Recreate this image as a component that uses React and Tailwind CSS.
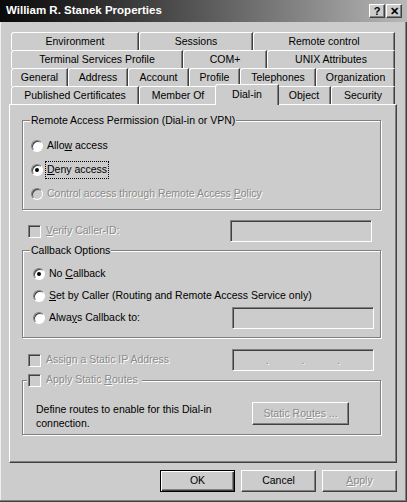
import React from "react";

const dim = "text-[#8a8a8a] [text-shadow:1px_1px_0_#fff]";
const sunken =
  "border border-t-[#808080] border-l-[#808080] border-r-white border-b-white shadow-[inset_1px_1px_0_#404040]";
const raised =
  "border border-t-white border-l-white border-r-[#404040] border-b-[#404040] shadow-[inset_-1px_-1px_0_#808080]";

function Tab({ label, w }) {
  return (
    <div
      className={`${w} h-full flex items-center justify-center border-t border-l border-r border-t-white border-l-white border-r-[#404040] rounded-tl-[3px] shadow-[inset_-1px_0_0_#808080]`}
    >
      {label}
    </div>
  );
}

function Radio({ checked, disabled }) {
  return (
    <span
      className={`w-[12px] h-[12px] rounded-full shrink-0 flex items-center justify-center border border-t-[#808080] border-l-[#808080] border-r-white border-b-white shadow-[inset_1px_1px_0_#404040] ${
        disabled ? "bg-[#cccccc]" : "bg-white"
      }`}
    >
      {checked && <span className="w-[4px] h-[4px] rounded-full bg-black" />}
    </span>
  );
}

function Check() {
  return <span className={`w-[13px] h-[13px] shrink-0 bg-[#cccccc] ${sunken}`} />;
}

function Field({ children, className = "" }) {
  return (
    <div className={`w-[142px] h-[22px] bg-[#cccccc] ${sunken} ${className}`}>
      {children}
    </div>
  );
}

export default function App() {
  return (
    <div className="w-[407px] h-[502px] bg-[#cccccc] flex flex-col overflow-hidden text-[10.5px] text-black font-['Liberation_Sans',Arial,sans-serif] shadow-[inset_-1px_-1px_0_#404040,inset_-2px_-2px_0_#808080,inset_1px_0_0_#efefef]">
      {/* Title bar */}
      <div className="h-[22px] w-full flex items-center bg-linear-to-r from-[#0a0a0a] to-[#b8b8b8] pl-[6px] pr-[5px]">
        <span className="text-white font-bold text-[11.5px]">
          William R. Stanek Properties
        </span>
        <div className="ml-auto flex gap-[1px]">
          <span className={`w-[16px] h-[14px] bg-[#cccccc] flex items-center justify-center font-bold text-[11px] ${raised}`}>
            ?
          </span>
          <span className={`w-[16px] h-[14px] bg-[#cccccc] flex items-center justify-center font-bold text-[11px] ${raised}`}>
            ✕
          </span>
        </div>
      </div>

      <div className="pl-[9px] pt-[10px]">
        {/* Tabs */}
        <div className="ml-[2px] w-[384px] flex flex-col">
          <div className="h-[18px] flex">
            <Tab label="Environment" w="w-[128px]" />
            <Tab label="Sessions" w="w-[114px]" />
            <Tab label="Remote control" w="w-[142px]" />
          </div>
          <div className="h-[18px] flex">
            <Tab label="Terminal Services Profile" w="w-[172px]" />
            <Tab label="COM+" w="w-[84px]" />
            <Tab label="UNIX Attributes" w="w-[128px]" />
          </div>
          <div className="h-[18px] flex">
            <Tab label="General" w="w-[57px]" />
            <Tab label="Address" w="w-[60px]" />
            <Tab label="Account" w="w-[61px]" />
            <Tab label="Profile" w="w-[51px]" />
            <Tab label="Telephones" w="w-[76px]" />
            <Tab label="Organization" w="w-[79px]" />
          </div>
          <div className="h-[18px] flex items-end">
            <Tab label="Published Certificates" w="w-[128px]" />
            <Tab label="Member Of" w="w-[78px]" />
            <div className="relative z-10 w-[64px] h-[21px] -mx-[2px] -mb-px shrink-0 bg-[#cccccc] flex justify-center pt-[2px] border-t border-l border-r border-t-white border-l-white border-r-[#404040] rounded-tl-[3px] shadow-[inset_-1px_0_0_#808080]">
              Dial-in
            </div>
            <Tab label="Object" w="w-[54px]" />
            <Tab label="Security" w="w-[64px]" />
          </div>
        </div>

        {/* Panel */}
        <div className="w-[388px] h-[359px] pl-[12px] pt-[15px] border border-t-white border-l-white border-r-[#404040] border-b-[#404040] shadow-[inset_-1px_-1px_0_#808080] flex flex-col">
          {/* Remote access permission */}
          <div className="relative w-[359px] h-[90px] pt-[13px] pl-[8px] border border-[#808080] shadow-[inset_1px_1px_0_#fff,1px_1px_0_#fff]">
            <span className="absolute -top-[8px] left-[7px] px-[1px] leading-[14px] bg-[#cccccc]">
              Remote Access Permission (Dial-in or VPN)
            </span>
            <div className="h-[24px] flex items-center gap-[4px]">
              <Radio />
              <span>
                Allo<u>w</u> access
              </span>
            </div>
            <div className="h-[24px] flex items-center gap-[3px]">
              <Radio checked />
              <span className="px-[1px] outline outline-1 outline-dotted outline-black">
                <u>D</u>eny access
              </span>
            </div>
            <div className="h-[24px] flex items-center gap-[4px]">
              <Radio disabled />
              <span className={dim}>
                Control access through Remote Access <u>P</u>olicy
              </span>
            </div>
          </div>

          {/* Verify caller id */}
          <div className="mt-[10px] w-[359px] h-[22px] flex items-center">
            <span className="ml-[6px] flex">
              <Check />
            </span>
            <span className={`ml-[5px] ${dim}`}>
              <u>V</u>erify Caller-ID:
            </span>
            <Field className="ml-auto mr-[9px]" />
          </div>

          {/* Callback options */}
          <div className="relative mt-[8px] w-[359px] h-[88px] pt-[12px] pl-[10px] border border-[#808080] shadow-[inset_1px_1px_0_#fff,1px_1px_0_#fff]">
            <span className="absolute -top-[8px] left-[7px] px-[1px] leading-[14px] bg-[#cccccc]">
              Callback Options
            </span>
            <div className="h-[22px] flex items-center gap-[4px]">
              <Radio checked />
              <span>
                No <u>C</u>allback
              </span>
            </div>
            <div className="h-[22px] flex items-center gap-[4px]">
              <Radio />
              <span>
                <u>S</u>et by Caller (Routing and Remote Access Service only)
              </span>
            </div>
            <div className="h-[22px] flex items-center gap-[4px] pr-[6px]">
              <Radio />
              <span>
                Alwa<u>y</u>s Callback to:
              </span>
              <Field className="ml-auto" />
            </div>
          </div>

          {/* Static IP */}
          <div className="mt-[11px] w-[359px] h-[22px] flex items-center">
            <span className="ml-[6px] flex">
              <Check />
            </span>
            <span className={`ml-[5px] ${dim}`}>Assign a Static IP Address</span>
            <Field className="ml-auto mr-[7px] flex items-center justify-evenly">
              <span className={`${dim} leading-none`}>.</span>
              <span className={`${dim} leading-none`}>.</span>
              <span className={`${dim} leading-none`}>.</span>
            </Field>
          </div>

          {/* Static routes */}
          <div className="relative mt-[9px] w-[359px] h-[55px] pt-[21px] pl-[13px] pr-[31px] flex items-start border border-[#808080] shadow-[inset_1px_1px_0_#fff,1px_1px_0_#fff]">
            <span className="absolute -top-[8px] left-[4px] pl-[1px] pr-[4px] h-[14px] flex items-center gap-[5px] bg-[#cccccc]">
              <Check />
              <span className={dim}>
                Apply Static <u>R</u>outes
              </span>
            </span>
            <p className="leading-[14px]">
              Define routes to enable for this Dial-in
              <br />
              connection.
            </p>
            <div className={`ml-auto w-[97px] h-[23px] flex items-center justify-center bg-[#cccccc] ${raised}`}>
              <span className={dim}>
                Static Ro<u>u</u>tes ...
              </span>
            </div>
          </div>
        </div>

        {/* Dialog buttons */}
        <div className="mt-[7px] w-[388px] flex justify-end gap-[6px]">
          <div className="w-[75px] h-[22px] flex items-center justify-center border border-black shadow-[inset_1px_1px_0_#fff,inset_-1px_-1px_0_#404040,inset_-2px_-2px_0_#808080]">
            OK
          </div>
          <div className={`w-[75px] h-[22px] flex items-center justify-center ${raised}`}>
            Cancel
          </div>
          <div className={`w-[75px] h-[22px] flex items-center justify-center ${raised}`}>
            <span className={dim}>
              <u>A</u>pply
            </span>
          </div>
        </div>
      </div>
    </div>
  );
}
